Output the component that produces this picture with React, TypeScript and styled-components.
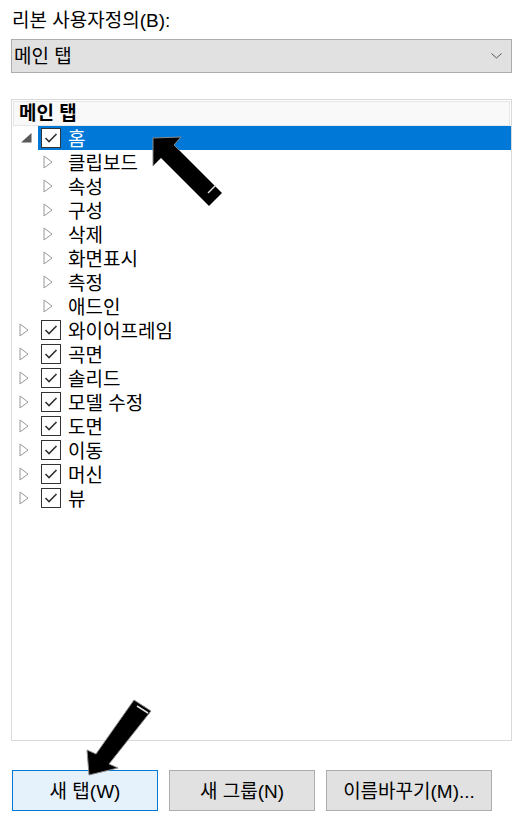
import React from "react";
import styled, { createGlobalStyle } from "styled-components";

const Global = createGlobalStyle`
  html, body { margin: 0; padding: 0; background: #ffffff; }
  body { font-family: "Liberation Sans", "Noto Sans CJK KR", sans-serif; color: #000; }
`;

const Page = styled.div`
  position: relative;
  width: 523px;
  height: 819px;
  padding: 8px 11px 0 11px;
  box-sizing: border-box;
  display: flex;
  flex-direction: column;
  overflow: hidden;
`;

const Label = styled.div`
  font-size: 19px;
  line-height: 24px;
  height: 24px;
  padding: 1px 0 0 1px;
  box-sizing: border-box;
`;

const Dropdown = styled.div`
  margin-top: 7px;
  height: 34px;
  box-sizing: border-box;
  border: 1px solid #adadad;
  background: #e1e1e1;
  display: flex;
  align-items: center;
  justify-content: space-between;
  padding: 2px 9px 0 2px;
  font-size: 19px;
  line-height: 24px;
`;

const Chevron = styled.svg`
  margin-top: -2px;
`;

const Panel = styled.div`
  margin-top: 26px;
  height: 642px;
  box-sizing: border-box;
  border: 1px solid #d9d9d9;
  display: flex;
  flex-direction: column;
  background: #fff;
`;

const Header = styled.div`
  margin: 1px 1px 0 1px;
  height: 25px;
  box-sizing: border-box;
  border: 1px solid #e6e6e6;
  background: #f9f9f9;
  font-size: 19px;
  font-weight: 700;
  line-height: 22px;
  padding: 1px 0 0 5px;
`;

const Row = styled.div<{ $level: number }>`
  height: 24px;
  display: flex;
  align-items: stretch;
  padding-left: ${(p) => (p.$level === 0 ? 7 : 31)}px;
`;

const Expander = styled.div`
  width: 19px;
  display: flex;
  align-items: center;
  flex-shrink: 0;
`;

const Item = styled.div<{ $selected?: boolean; $level: number }>`
  flex: 1;
  display: flex;
  align-items: center;
  padding-left: ${(p) => (p.$level === 0 ? 3 : 6)}px;
  background: ${(p) => (p.$selected ? "#0078d7" : "transparent")};
  color: ${(p) => (p.$selected ? "#fff" : "#000")};
  font-size: 19px;
  line-height: 24px;
  white-space: pre;
`;

const ItemText = styled.span`
  padding-top: 3px;
`;

const Check = styled.div`
  width: 20px;
  height: 20px;
  box-sizing: border-box;
  border: 1px solid #333;
  background: #fff;
  margin-right: 7px;
  display: flex;
  align-items: center;
  justify-content: center;
  flex-shrink: 0;
`;

const Buttons = styled.div`
  margin-top: 29px;
  display: flex;
  gap: 11px;
  padding-left: 1px;
`;

const Button = styled.div<{ $primary?: boolean; $w: number }>`
  width: ${(p) => p.$w}px;
  height: 41px;
  box-sizing: border-box;
  border: 1px solid ${(p) => (p.$primary ? "#0078d7" : "#adadad")};
  background: ${(p) => (p.$primary ? "#e5f1fb" : "#e1e1e1")};
  display: flex;
  align-items: center;
  justify-content: center;
  padding-top: 2px;
  font-size: 19px;
  line-height: 24px;
  white-space: pre;
`;

const Overlay = styled.svg`
  position: absolute;
  left: 0;
  top: 0;
  pointer-events: none;
`;

const Collapsed = () => (
  <svg width="10" height="14" viewBox="0 0 10 14">
    <path d="M1 1 L9 7 L1 13 Z" fill="none" stroke="#9a9a9a" strokeWidth="1" />
  </svg>
);

const Expanded = () => (
  <svg width="12" height="10" viewBox="0 0 12 10" style={{ marginLeft: 1 }}>
    <path d="M1 9.5 L11.5 9.5 L11.5 0 Z" fill="#595959" />
  </svg>
);

const Tick = () => (
  <svg width="14" height="12" viewBox="0 0 14 12">
    <path d="M1.5 6 L5 9.5 L12.5 2" fill="none" stroke="#333" strokeWidth="1.6" />
  </svg>
);

type Node = { label: string; level: number; check?: boolean; expanded?: boolean; selected?: boolean };

const nodes: Node[] = [
  { label: "홈", level: 0, check: true, expanded: true, selected: true },
  { label: "클립보드", level: 1 },
  { label: "속성", level: 1 },
  { label: "구성", level: 1 },
  { label: "삭제", level: 1 },
  { label: "화면표시", level: 1 },
  { label: "측정", level: 1 },
  { label: "애드인", level: 1 },
  { label: "와이어프레임", level: 0, check: true },
  { label: "곡면", level: 0, check: true },
  { label: "솔리드", level: 0, check: true },
  { label: "모델 수정", level: 0, check: true },
  { label: "도면", level: 0, check: true },
  { label: "이동", level: 0, check: true },
  { label: "머신", level: 0, check: true },
  { label: "뷰", level: 0, check: true },
];

export default function App() {
  return (
    <>
      <Global />
      <Page>
        <Label>리본 사용자정의(B):</Label>
        <Dropdown>
          <span>메인 탭</span>
          <Chevron width="11" height="6" viewBox="0 0 11 6">
            <path d="M0.5 0.5 L5.5 5 L10.5 0.5" fill="none" stroke="#555" strokeWidth="1" />
          </Chevron>
        </Dropdown>
        <Panel>
          <Header>메인 탭</Header>
          {nodes.map((n, i) => (
            <Row key={i} $level={n.level}>
              <Expander>{n.expanded ? <Expanded /> : <Collapsed />}</Expander>
              <Item $selected={n.selected} $level={n.level}>
                {n.check && (
                  <Check>
                    <Tick />
                  </Check>
                )}
                <ItemText>{n.label}</ItemText>
              </Item>
            </Row>
          ))}
        </Panel>
        <Buttons>
          <Button $primary $w={146}>새 탭(W)</Button>
          <Button $w={146}>새 그룹(N)</Button>
          <Button $w={166}>이름바꾸기(M)...</Button>
        </Buttons>
        <Overlay width="523" height="819" viewBox="0 0 523 819">
          <polygon
            points="153,138 181,137 174,145 222,193 209,206 161,158 153,166"
            fill="#000"
            stroke="#8a8a8a"
            strokeWidth="1"
          />
          <line x1="208" y1="193" x2="216" y2="185" stroke="#e0e0e0" strokeWidth="1.5" />
          <polygon
            points="134,700 96,754 87,750 89,775 118,768 109,764 151,711"
            fill="#000"
            stroke="#8a8a8a"
            strokeWidth="1"
          />
          <line x1="137" y1="706" x2="148" y2="713" stroke="#e0e0e0" strokeWidth="1.5" />
        </Overlay>
      </Page>
    </>
  );
}
